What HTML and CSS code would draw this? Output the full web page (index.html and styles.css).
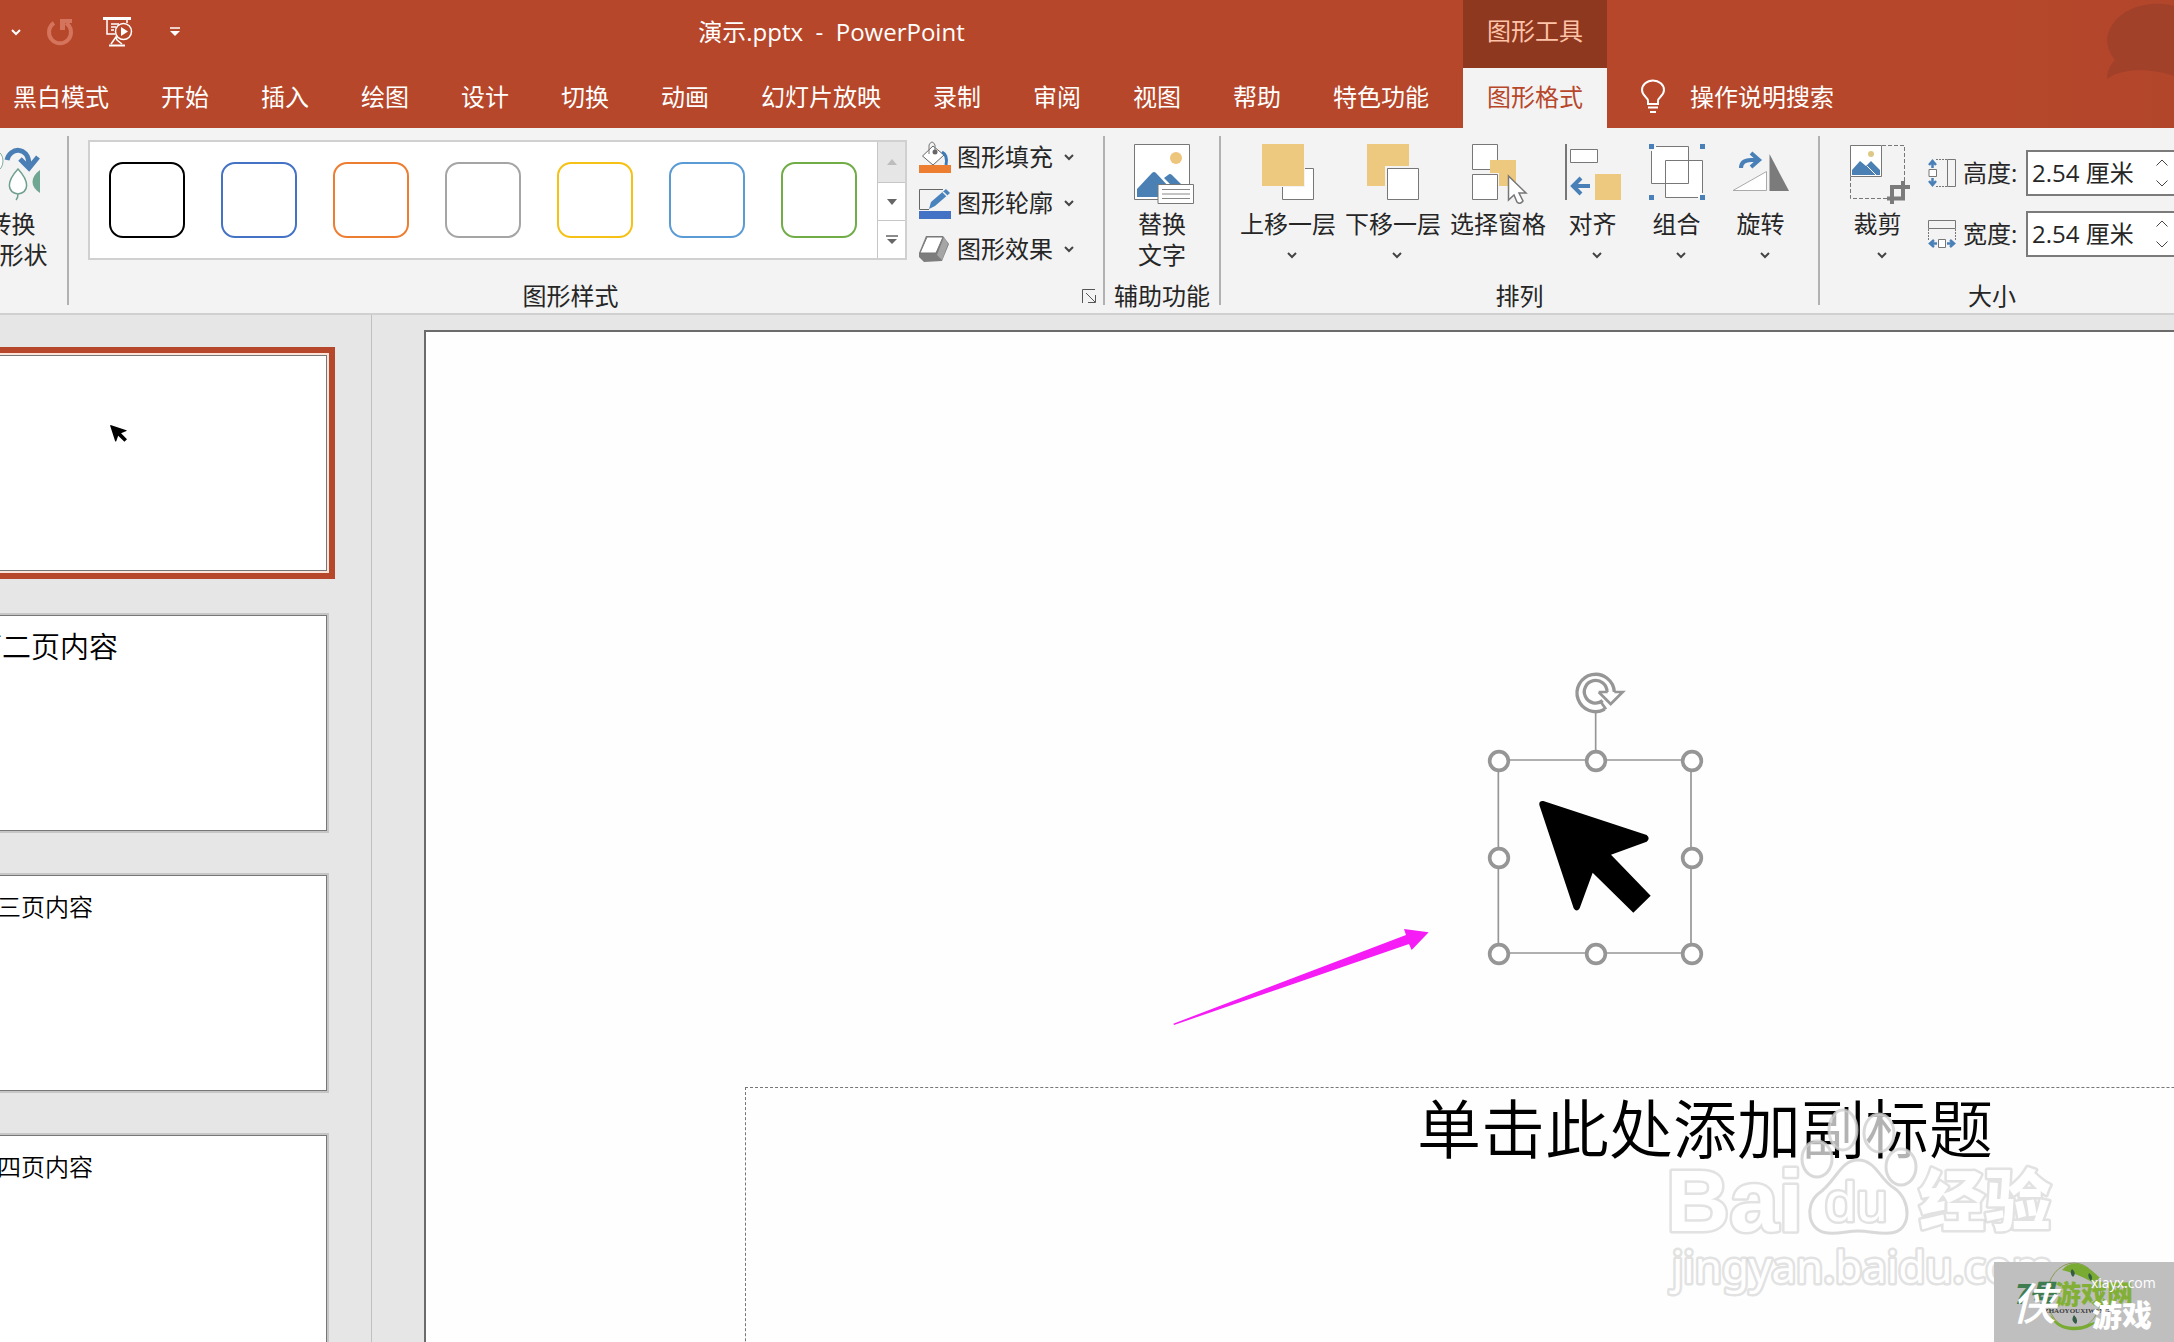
FILE: index.html
```html
<!DOCTYPE html>
<html lang="zh-CN">
<head>
<meta charset="utf-8">
<title>演示.pptx - PowerPoint</title>
<link rel="stylesheet" href="styles.css">
</head>
<body>
<svg class="defs" aria-hidden="true">
  <symbol id="drop" viewBox="0 0 20 12"><path d="M10 4l4 4 4-4" fill="none" stroke="#444" stroke-width="2"/></symbol>
  <symbol id="cursor" viewBox="0 0 110 112"><path d="M3 0L107 34Q112 37 107 40L72 54L111 94L94 111L53 71L40 107Q37 112 33 107L0 5Q-1 0 3 0Z"/></symbol>
</svg>

<header class="header">
  <div class="titlebar">
    <div class="quick">
      <button class="qbtn q-undo" aria-label="撤消选项"><svg width="10" height="8"><path d="M1 2l4 4 4-4" fill="none" stroke="#fff" stroke-width="2"/></svg></button>
      <button class="qbtn q-redo" aria-label="重复"><svg width="28" height="28"><path d="M8 5A11 11 0 1 0 20 5" fill="none" stroke="#d4745c" stroke-width="4"/><path d="M14 1H26V5H19V12H14Z" fill="#d4745c"/></svg></button>
      <button class="qbtn q-show" aria-label="从头开始"><svg width="30" height="30" fill="none" stroke="#fff"><path d="M0 1.500H28" stroke-width="3"/><path d="M4 3V17H12M24 3V6M8 7H16M8 10H13M8 13H11" stroke-width="1.500"/><circle cx="20.500" cy="14.500" r="8" stroke-width="1.500"/><path d="M18 10V19L25 14.500Z" fill="#fff" stroke="none"/><path d="M6 28.500H22" stroke-width="2"/><path d="M8 27L13 20L14 23L19 27" stroke-width="1.500"/></svg></button>
      <button class="qbtn" aria-label="自定义快速访问工具栏"><svg width="10" height="10"><path d="M0 1H10" stroke="#fff" stroke-width="1.500"/><path d="M0 4H10L5 9Z" fill="#fff"/></svg></button>
    </div>
    <h1 class="title">演示.pptx&nbsp; - &nbsp;PowerPoint</h1>
  </div>
  <div class="context">图形工具</div>
  <nav class="tabs">
    <button class="tab">黑白模式</button>
    <button class="tab">开始</button>
    <button class="tab">插入</button>
    <button class="tab">绘图</button>
    <button class="tab">设计</button>
    <button class="tab">切换</button>
    <button class="tab">动画</button>
    <button class="tab">幻灯片放映</button>
    <button class="tab">录制</button>
    <button class="tab">审阅</button>
    <button class="tab">视图</button>
    <button class="tab">帮助</button>
    <button class="tab">特色功能</button>
  </nav>
  <button class="tab tab-active">图形格式</button>
  <button class="tellme">
    <svg width="24" height="34" fill="none" stroke="#fff" stroke-width="2"><path d="M7 24V21C7 17 1 16 1 10A11 9.500 0 0 1 23 10C23 16 17 17 17 21V24Z"/><path d="M7 27.500H17M9 32H15"/></svg>
    <span>操作说明搜索</span>
  </button>
  <svg class="deco" width="68" height="84" aria-hidden="true"><path d="M68 6C50 0 8 4 1 38C1 50 6 56 9 60C3 66 1 72 1 79C20 66 50 70 68 76Z" fill="#a2412a"/></svg>
</header>

<div class="ribbon">
  <section class="group g-convert">
    <div class="tools">
      <button class="big">
        <svg class="icon" viewBox="0 0 60 60"><ellipse cx="14" cy="17" rx="7" ry="10" fill="#fff" stroke="#7fae9c"/><path d="M25 16C28 3 46 2 47 20" fill="none" stroke="#4a7fb5" stroke-width="5"/><path d="M38 15L47 24L56 13" fill="none" stroke="#4a7fb5" stroke-width="5"/><path d="M36 25C24 38 25 48 36 50C47 48 48 38 36 25ZM36 50Q36 54 34 56" fill="#fff" stroke="#6f9f8f" stroke-width="1.500"/><path d="M58 26C48 33 48 43 58 49Z" fill="#6fa793"/></svg>
        <span>转换<br>为形状</span>
      </button>
    </div>
  </section>

  <section class="group g-styles">
    <div class="tools">
      <div class="gallery">
        <div class="swatches">
          <button class="swatch s-black" aria-label="黑色轮廓"></button>
          <button class="swatch s-blue" aria-label="蓝色轮廓"></button>
          <button class="swatch s-orange" aria-label="橙色轮廓"></button>
          <button class="swatch s-gray" aria-label="灰色轮廓"></button>
          <button class="swatch s-gold" aria-label="金色轮廓"></button>
          <button class="swatch s-sky" aria-label="浅蓝轮廓"></button>
          <button class="swatch s-green" aria-label="绿色轮廓"></button>
        </div>
        <div class="scroller">
          <button class="scroll off" aria-label="上一行"><svg width="10" height="6"><path d="M0 6L5 0L10 6Z" fill="#bdbdbd"/></svg></button>
          <button class="scroll" aria-label="下一行"><svg width="10" height="6"><path d="M0 0H10L5 6Z" fill="#666"/></svg></button>
          <button class="scroll" aria-label="更多"><svg width="12" height="10"><path d="M0 1H12" stroke="#666" stroke-width="1.500"/><path d="M1 4H11L6 9Z" fill="#666"/></svg></button>
        </div>
      </div>
      <div class="list">
        <button class="row">
          <svg width="32" height="32"><path d="M3.500 15L14 5L25 14L14 24Z" fill="#fff" stroke="#666"/><path d="M10 13V4Q13-2 16 4V11" fill="none" stroke="#777"/><circle cx="16" cy="11" r="2.500" fill="#666"/><path d="M23 11Q29 14 27 24" fill="none" stroke="#3d7ab8" stroke-width="3"/><path d="M0 24H32V32H0Z" fill="#ed7d31"/></svg>
          <span>图形填充</span><svg class="drop"><use href="#drop"/></svg>
        </button>
        <button class="row">
          <svg width="32" height="32"><path d="M24 2.500H.5V22.500H10" fill="none" stroke="#666"/><path d="M10 22L12 15L27 2L31 6L16 19Z" fill="#4a82bd"/><path d="M24 5L28 9" stroke="#f3f3f3" stroke-width="1.500"/><path d="M0 24H32V32H0Z" fill="#4472c4"/></svg>
          <span>图形轮廓</span><svg class="drop"><use href="#drop"/></svg>
        </button>
        <button class="row">
          <svg width="32" height="32"><path d="M7 3H24L30 11L23 28L5 29L0 24V20Z" fill="#7d7d7d"/><path d="M25 4L29 11L23 27L18 22Z" fill="#a5a5a5"/><path d="M8 4H24L17 20H1Z" fill="#fff" stroke="#777"/></svg>
          <span>图形效果</span><svg class="drop"><use href="#drop"/></svg>
        </button>
      </div>
    </div>
    <div class="caption"><span>图形样式</span><button class="launcher" aria-label="设置形状格式"><svg width="14" height="14" fill="none" stroke="#555"><path d="M.5 14V.5H13M4 4L13 13M13.500 6V13.500H6"/></svg></button></div>
  </section>

  <section class="group g-alt">
    <div class="tools">
      <button class="big">
        <svg class="icon" viewBox="0 0 60 60"><path d="M2.500 .5H57.500V55.500H2.500Z" fill="#fff" stroke="#777"/><circle cx="44" cy="14" r="6" fill="#edc57c"/><path d="M5 53V45L20 29Q22 27 24 29L38 44V53ZM32 34L36 31Q38 29 40 31L49 40H38Z" fill="#4a80b4"/><path d="M26 40.500H61.500V59.500H26Z" fill="#fff" stroke="#777"/><path d="M30 45.500H58M30 50H58M30 54.500H58" stroke="#888"/></svg>
        <span>替换<br>文字</span>
      </button>
    </div>
    <div class="caption"><span>辅助功能</span></div>
  </section>

  <section class="group g-arrange">
    <div class="tools">
      <button class="big">
        <svg class="icon" viewBox="0 0 60 60"><path d="M24.500 24.500H55.500V55.500H24.500Z" fill="#fff" stroke="#777"/><path d="M4 0H46V42H4Z" fill="#edc87f" stroke="#f3f3f3" stroke-width="2" paint-order="stroke"/></svg>
        <span>上移一层</span><svg class="drop"><use href="#drop"/></svg>
      </button>
      <button class="big">
        <svg class="icon" viewBox="0 0 60 60"><path d="M4 0H46V42H4Z" fill="#edc87f"/><path d="M22 22H58V58H22Z" fill="#f3f3f3"/><path d="M24.500 24.500H55.500V55.500H24.500Z" fill="#fff" stroke="#777"/></svg>
        <span>下移一层</span><svg class="drop"><use href="#drop"/></svg>
      </button>
      <button class="big">
        <svg class="icon" viewBox="0 0 60 60"><path d="M4.500 .5H29.500V25.500H4.500ZM4.500 30.500H29.500V55.500H4.500Z" fill="#fff" stroke="#777"/><path d="M22 16H48V42H31V29H22Z" fill="#edc87f"/><path d="M40.500 32V56L46 51L49 58Q52 61 55 57L51 49H58Z" fill="#fff" stroke="#777" stroke-width="1.500"/></svg>
        <span>选择窗格</span>
      </button>
      <button class="big">
        <svg class="icon" viewBox="0 0 60 60"><path d="M3 0V56" stroke="#777" stroke-width="2"/><path d="M7.500 5.500H34.500V18.500H7.500Z" fill="#fff" stroke="#777"/><path d="M32 30H58V56H32Z" fill="#edc87f"/><path d="M27 42H10M18 34L10 42L18 50" fill="none" stroke="#4a80b8" stroke-width="4"/></svg>
        <span>对齐</span><svg class="drop"><use href="#drop"/></svg>
      </button>
      <button class="big">
        <svg class="icon" viewBox="0 0 60 60"><path d="M9 2.500H41.500V39.500H4.500V7" fill="#fff"/><path d="M18.500 16.500H55.500V53.500H18.500Z" fill="#fff"/><path d="M9 2.500H41.500V39.500H4.500V7M55.500 49V16.500H18.500V53.500H51" fill="none" stroke="#777"/><path d="M2 0H7V5H2ZM53 0H58V5H53ZM2 51H7V56H2ZM53 51H58V56H53Z" fill="#4a80b8"/></svg>
        <span>组合</span><svg class="drop"><use href="#drop"/></svg>
      </button>
      <button class="big">
        <svg class="icon" viewBox="0 0 60 60"><path d="M2 46.500L35.500 27.500V46.500Z" fill="#fff" stroke="#aaa"/><path d="M38.500 10L58 47H38.500Z" fill="#7b7b7b"/><path d="M10 24Q10 16 20 16H28M20 9L28 16L20 23" fill="none" stroke="#4a80b8" stroke-width="4"/></svg>
        <span>旋转</span><svg class="drop"><use href="#drop"/></svg>
      </button>
    </div>
    <div class="caption"><span>排列</span></div>
  </section>

  <section class="group g-size">
    <div class="tools">
      <button class="big">
        <svg class="icon" viewBox="0 0 60 60"><path d="M34 1.500H56.500V37M2.500 33V54.500H39" fill="none" stroke="#777" stroke-dasharray="4 2"/><path d="M2.500 1.500H33.500V32.500H2.500Z" fill="#fff" stroke="#777"/><circle cx="23" cy="10" r="3" fill="#dfc887"/><path d="M4 31V26L12 17L18 22L23 17L32 26V31Z" fill="#4a80b4"/><path d="M19 22L28 31" stroke="#fff"/><path d="M44 60V43H62M39 54.500H55V37" fill="none" stroke="#7b7b7b" stroke-width="4"/></svg>
        <span>裁剪</span><svg class="drop"><use href="#drop"/></svg>
      </button>
      <div class="fields">
        <div class="field">
          <svg width="28" height="28" fill="none" stroke="#777"><path d="M1 10.500H8.500V17.500H1Z" fill="#fff"/><path d="M19.500 .5H27.500V27.500H19.500Z"/><path d="M8 .5H19M8 27.500H19" stroke-dasharray="2 1"/><path d="M4.500 9V2M1 6L4.500 2L8 6M4.500 19V26M1 22L4.500 26L8 22" stroke="#4a80b8" stroke-width="2.500"/></svg>
          <label for="shape-height">高度:</label>
          <div class="spin"><input id="shape-height" type="text" value="2.54 厘米"><div class="steps"><button aria-label="增加高度"><svg width="12" height="7"><path d="M.5 6.500L6 1L11.500 6.500" fill="none" stroke="#444"/></svg></button><button aria-label="减小高度"><svg width="12" height="7"><path d="M.5 .5L6 6L11.500 .5" fill="none" stroke="#444"/></svg></button></div></div>
        </div>
        <div class="field">
          <svg width="28" height="28" fill="none" stroke="#777"><path d="M.5 .5H27.500V8.500H.5Z"/><path d="M.5 9V20M27.500 9V20" stroke-dasharray="2 1"/><path d="M10.500 19.500H17.500V27.500H10.500Z" fill="#fff"/><path d="M9 23.500H2M6 20L2 23.500L6 27M19 23.500H26M22 20L26 23.500L22 27" stroke="#4a80b8" stroke-width="2.500"/></svg>
          <label for="shape-width">宽度:</label>
          <div class="spin"><input id="shape-width" type="text" value="2.54 厘米"><div class="steps"><button aria-label="增加宽度"><svg width="12" height="7"><path d="M.5 6.500L6 1L11.500 6.500" fill="none" stroke="#444"/></svg></button><button aria-label="减小宽度"><svg width="12" height="7"><path d="M.5 .5L6 6L11.500 .5" fill="none" stroke="#444"/></svg></button></div></div>
        </div>
      </div>
    </div>
    <div class="caption"><span>大小</span></div>
  </section>
</div>

<main class="workspace">
  <aside class="thumbs">
    <div class="thumb thumb-active"><svg class="mini" width="17" height="17"><use href="#cursor"/></svg></div>
    <div class="thumb thumb-large">第二页内容</div>
    <div class="thumb">第三页内容</div>
    <div class="thumb">第四页内容</div>
  </aside>
  <div class="stage">
    <div class="slide">
      <svg class="shape" viewBox="0 0 840 1020" fill="none" stroke="#969696">
        <path d="M407 188V300M115 330H693V909H115Z" stroke-width="5"/>
        <path d="M428 152A34 34 0 1 1 441 126M434 178A56 56 0 1 1 463 126" stroke-width="10"/>
        <path d="M416 126H443M463 126H488L452 162L416 126M420 152L438 178" stroke-width="8"/>
        <g fill="#fff" stroke-width="11"><circle cx="117" cy="333" r="28"/><circle cx="408" cy="333" r="28"/><circle cx="696" cy="333" r="28"/><circle cx="117" cy="624" r="28"/><circle cx="696" cy="624" r="28"/><circle cx="117" cy="912" r="28"/><circle cx="408" cy="912" r="28"/><circle cx="696" cy="912" r="28"/></g>
        <path d="M250 453L560 555Q572 565 560 575L453 614L572 737L520 788L398 668L359 775Q350 788 341 775L238 465Q236 452 250 453Z" fill="#000" stroke="none"/>
      </svg>
      <svg class="pointer" viewBox="0 0 960 720"><path d="M70 371L768 105L762 87L836 97L785 150L777 132L72 375Z" fill="#f51cf5"/></svg>
      <div class="subtitle">单击此处添加副标题</div>
    </div>
  </div>
</main>

<svg class="watermark" width="534" height="282" aria-hidden="true">
  <g class="wm-shape">
    <ellipse cx="203" cy="70" rx="14" ry="20"/><ellipse cx="239" cy="73" rx="15" ry="19"/><ellipse cx="177" cy="99" rx="15" ry="18"/><ellipse cx="261" cy="107" rx="15" ry="18"/>
    <path d="M218 100C236 100 240 120 254 128C272 140 272 172 250 173C238 174 230 171 218 171C206 171 200 174 188 173C168 172 164 146 178 134C196 122 200 100 218 100Z"/>
    <text class="wm-bai" x="26" y="171">Bai</text>
    <text class="wm-du" x="185" y="161">du</text>
    <text class="wm-exp" x="279" y="165">经验</text>
    <text class="wm-url" x="32" y="223">jingyan.baidu.com</text>
  </g>
</svg>
<svg class="badge" width="180" height="80" aria-hidden="true">
  <ellipse cx="80" cy="34" rx="27" ry="33" fill="none" stroke="#8a9a50"/>
  <path d="M68 8Q82-8 106 16L98 20Q84 12 68 8ZM56 52Q66 68 88 64L106 58Q92 70 76 68Q60 66 56 52Z" fill="#79ab33"/>
  <path d="M78 7Q83 11 79 15Q75 11 78 7ZM95 11Q100 14 97 19Q93 15 95 11ZM80 53Q85 58 82 62Q76 59 80 53Z" fill="#345c45"/>
  <text class="b-seven" x="18" y="42">7号</text>
  <text class="b-site" x="61" y="42">游戏网</text>
  <text class="b-tiny" x="50" y="51">ZHAOYOUXIWANG</text>
  <text class="b-xia" x="18" y="58">侠</text>
  <text class="b-game" x="98" y="64">游戏</text>
  <text class="b-url" x="97" y="26">xiayx.com</text>
</svg>
</body>
</html>
```
FILE: styles.css
```css
* { box-sizing: border-box; }

body {
  position: relative;
  display: flex;
  flex-direction: column;
  height: 100vh;
  margin: 0;
  overflow: hidden;
  background: #e6e6e6;
  color: #262626;
  font: 24px/30px "Open Sans", "Noto Sans CJK SC", sans-serif;
}

button {
  margin: 0;
  padding: 0;
  border: 0;
  background: none;
  color: inherit;
  font: inherit;
  white-space: nowrap;
}

svg { display: block; flex: none; overflow: visible; }
.defs { position: absolute; width: 0; height: 0; }

/* Title bar and tabs */
.header {
  position: relative;
  display: grid;
  grid-template: 68px 60px / auto 144px 1fr;
  flex: none;
  background: linear-gradient(90deg, #b7472a 88%, #b2462b);
  color: #fff;
}

.titlebar { display: flex; align-items: center; padding-bottom: 4px; }
.quick { display: flex; align-items: center; width: 200px; padding-left: 11px; }
.q-undo { margin-right: 25px; }
.q-redo { margin-right: 29px; }
.q-show { margin-right: 37px; }
.title { flex: 1; margin: 0; padding-bottom: 1px; font-size: 24px; font-weight: 400; text-align: center; }

.context {
  padding-top: 16px;
  background: #8f3820;
  color: #ffc3a8;
  text-align: center;
}

.tabs { display: flex; grid-row: 2; grid-column: 1; margin-left: -13px; padding-right: 8px; }
.tab { padding: 0 26px 2px; }
.tab-active { grid-row: 2; padding: 0 0 2px; background: #f3f3f3; color: #b7472a; }
.tellme { display: flex; grid-row: 2; align-items: center; gap: 25px; padding: 0 0 2px 34px; }
.deco { position: absolute; right: 0; top: 0; }

/* Ribbon */
.ribbon {
  display: flex;
  flex: none;
  height: 187px;
  padding: 8px 0;
  border-bottom: 2px solid #d0d0d0;
  background: #f3f3f3;
}

.group { display: flex; flex: none; flex-direction: column; border-right: 2px solid #b1b1b1; }
.g-size { border-right: 0; }
.tools { display: flex; flex: 1; }
.caption { display: flex; align-items: center; height: 18px; line-height: 18px; text-align: center; }
.caption span { flex: 1; }
.launcher { margin: 0 7px 0 10px; }

.big {
  display: flex;
  flex-direction: column;
  align-items: center;
  min-width: 75px;
  padding-top: 8px;
  line-height: 31px;
}
.icon { width: 60px; height: 60px; margin-bottom: 4px; }
.drop { width: 20px; height: 12px; }
.big .drop { margin-top: 10px; }

.g-convert { width: 69px; }
.g-convert .big { margin-left: -26px; }
.g-styles .tools { gap: 12px; padding: 4px 28px 0 19px; }
.g-alt { width: 116px; }
.g-alt .tools { justify-content: center; }
.g-arrange .tools { gap: 9px; padding: 0 20px 0 19px; }
.g-size .tools { gap: 13px; padding-left: 20px; }
.g-size .caption { padding-right: 12px; }

.gallery { display: flex; width: 819px; height: 120px; border: 2px solid #d0d0d0; background: #fff; }
.swatches { display: flex; flex: 1; align-items: center; gap: 36px; padding-left: 19px; }
.swatch { width: 76px; height: 76px; border: 2px solid; border-radius: 14px; }
.s-black { border-color: #000; }
.s-blue { border-color: #4472c4; }
.s-orange { border-color: #ed7d31; }
.s-gray { border-color: #a5a5a5; }
.s-gold { border-color: #f5c114; }
.s-sky { border-color: #5b9bd5; }
.s-green { border-color: #70ad47; }
.scroller { display: grid; grid-template-rows: 40px 38px 1fr; width: 28px; border-left: 1px solid #c6c6c6; }
.scroll { display: grid; place-items: center; }
.scroll + .scroll { border-top: 1px solid #c6c6c6; }
.off { background: #e6e6e6; }

.list { display: flex; flex-direction: column; gap: 12px; }
.row { display: flex; align-items: center; gap: 6px; height: 34px; }
.row .drop { margin-left: -4px; }

.fields { display: flex; flex-direction: column; gap: 15px; padding-top: 14px; }
.field { display: grid; grid-template-columns: 28px 56px 150px; align-items: center; gap: 7px; white-space: nowrap; }
.spin { display: flex; height: 46px; border: 2px solid #7b7b7b; background: #fff; }
.spin input {
  flex: 1;
  min-width: 0;
  padding: 0 0 0 4px;
  border: 0;
  outline: 0;
  background: none;
  color: inherit;
  font: inherit;
}
.steps { display: flex; flex-direction: column; justify-content: center; gap: 14px; width: 18px; }

/* Workspace */
.workspace { display: flex; flex: 1; min-height: 0; overflow: hidden; }

.thumbs {
  display: flex;
  flex: none;
  flex-direction: column;
  gap: 44px;
  width: 372px;
  padding-top: 40px;
  border-right: 1px solid #c0c0c0;
}
.thumb {
  flex: none;
  width: 384px;
  height: 216px;
  margin-left: -57px;
  padding: 16px 29px;
  border: 1px solid #777;
  background: #fff;
  box-shadow: 0 0 0 2px #c6c6c6;
  color: #000;
  font-weight: 350;
}
.thumb-active { padding: 69px 166px; box-shadow: 0 0 0 2px #fae3d8, 0 0 0 8px #b7472a; }
.thumb-large { font-size: 29px; }

.stage { flex: 1; min-width: 0; padding: 15px 0 0 52px; overflow: hidden; }
.slide {
  position: relative;
  width: 2562px;
  aspect-ratio: 16 / 9;
  border: 2px solid #6b6b6b;
  background: #fefefe;
}
.shape { position: absolute; left: 1034px; top: 318px; width: 280px; height: 340px; }
.pointer { position: absolute; left: 724px; top: 568px; width: 320px; height: 240px; }
.subtitle {
  position: absolute;
  left: 319px;
  right: 319px;
  top: 755px;
  height: 400px;
  border: 1px dashed #777;
  color: #000;
  font-size: 64px;
  font-weight: 350;
  line-height: 82px;
  text-align: center;
}

/* Overlaid marks */
.watermark { position: absolute; right: 0; bottom: 0; }
.wm-shape { fill: #fff; fill-opacity: .7; stroke: #cfcfcf; stroke-opacity: .8; stroke-width: 3px; }
.wm-shape text { fill-opacity: 1; paint-order: stroke; stroke-width: 5px; stroke-linejoin: round; stroke-opacity: .6; }
.wm-bai { font: 700 88px "Liberation Sans", sans-serif; }
.wm-du { font: 400 56px "Liberation Sans", sans-serif; }
.wm-exp { font: 900 66px "Noto Sans CJK SC", sans-serif; }
.wm-url { font: 400 44px "Noto Sans", sans-serif; }

.badge { position: absolute; right: 0; bottom: 0; background: #bfbfbf; }
.b-seven { fill: #3f7d50; font: italic 900 27px "Noto Sans CJK SC", sans-serif; }
.b-site { fill: #82b036; font: 900 26px "Noto Sans CJK SC", sans-serif; }
.b-tiny { fill: #3c3c3c; font: 700 7px "Liberation Serif", serif; }
.b-xia { fill: #fff; font: italic 500 44px "Noto Sans CJK SC", sans-serif; }
.b-game { fill: #fff; font: 900 30px "Noto Sans CJK SC", sans-serif; }
.b-url { fill: #fff; font: 400 14px "Open Sans", sans-serif; }
```
